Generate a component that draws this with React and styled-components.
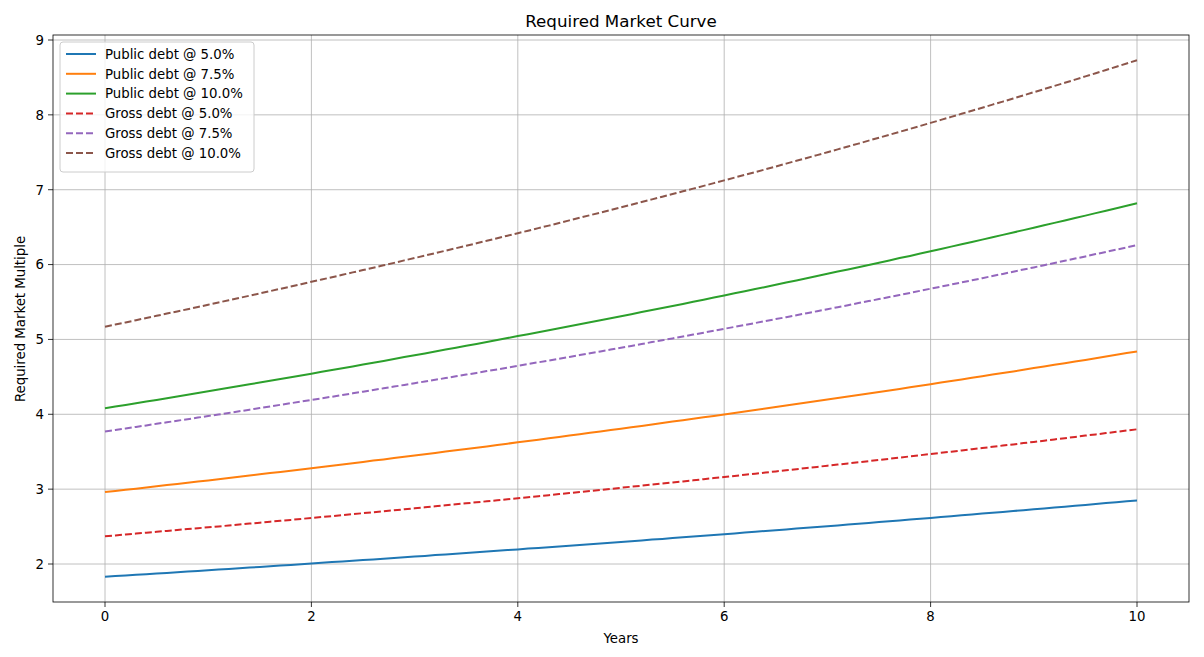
import React from "react";
import styled, { createGlobalStyle } from "styled-components";

const Global = createGlobalStyle`
  html, body { margin: 0; padding: 0; background: #fff; }
  body { font-family: "DejaVu Sans", sans-serif; }
`;

const Figure = styled.div`
  width: 1204px;
  height: 657px;
  background: #fff;
  overflow: hidden;
`;

const L = 53, R = 1189, T = 35, B = 602;
const xs = (t) => 105 + t * 103.2;
const ys = (v) => 564 - (v - 2) * 74.857;

const series = [
  { label: "Public debt @ 5.0%", c: "#1f77b4", v0: 1.83, v1: 2.85, dash: false },
  { label: "Public debt @ 7.5%", c: "#ff7f0e", v0: 2.96, v1: 4.84, dash: false },
  { label: "Public debt @ 10.0%", c: "#2ca02c", v0: 4.08, v1: 6.82, dash: false },
  { label: "Gross debt @ 5.0%", c: "#d62728", v0: 2.37, v1: 3.8, dash: true },
  { label: "Gross debt @ 7.5%", c: "#9467bd", v0: 3.77, v1: 6.26, dash: true },
  { label: "Gross debt @ 10.0%", c: "#8c564b", v0: 5.17, v1: 8.73, dash: true },
];

const pts = (s) => {
  const r = s.v1 / s.v0;
  const a = [];
  for (let i = 0; i <= 100; i++) {
    const t = i / 10;
    const exp = s.v0 * Math.pow(r, t / 10);
    const lin = s.v0 + (s.v1 - s.v0) * t / 10;
    const v = exp * 0.8 + lin * 0.2;
    a.push(`${xs(t).toFixed(1)},${ys(v).toFixed(1)}`);
  }
  return a.join(" ");
};

export default function App() {
  const xt = [0, 2, 4, 6, 8, 10];
  const yt = [2, 3, 4, 5, 6, 7, 8, 9];
  return (
    <Figure>
      <Global />
      <svg width="1204" height="657" fontFamily="DejaVu Sans, sans-serif">
        <defs>
          <clipPath id="ax"><rect x={L} y={T} width={R - L} height={B - T} /></clipPath>
        </defs>
        <text x="621" y="27" fontSize="16.7" textAnchor="middle" fill="#000">Required Market Curve</text>
        {xt.map((t) => (
          <g key={t}>
            <line x1={xs(t)} x2={xs(t)} y1={T} y2={B} stroke="#b0b0b0" strokeWidth="0.8" />
            <line x1={xs(t)} x2={xs(t)} y1={B} y2={B + 5} stroke="#000" strokeWidth="0.8" />
            <text x={xs(t)} y={B + 19} fontSize="13.3" textAnchor="middle">{t}</text>
          </g>
        ))}
        {yt.map((v) => (
          <g key={v}>
            <line x1={L} x2={R} y1={ys(v)} y2={ys(v)} stroke="#b0b0b0" strokeWidth="0.8" />
            <line x1={L - 5} x2={L} y1={ys(v)} y2={ys(v)} stroke="#000" strokeWidth="0.8" />
            <text x={L - 9} y={ys(v) + 4.8} fontSize="13.3" textAnchor="end">{v}</text>
          </g>
        ))}
        <g clipPath="url(#ax)">
          {series.map((s) => (
            <polyline key={s.label} points={pts(s)} fill="none" stroke={s.c} strokeWidth="2"
              strokeDasharray={s.dash ? "7 3" : undefined} />
          ))}
        </g>
        <rect x={L} y={T} width={R - L} height={B - T} fill="none" stroke="#000" strokeWidth="0.8" />
        <text x="621" y="643" fontSize="13.3" textAnchor="middle">Years</text>
        <text transform="translate(25 319) rotate(-90)" fontSize="13.3" textAnchor="middle">Required Market Multiple</text>
        <rect x="60" y="42" width="194" height="130" rx="3" fill="#fff" fillOpacity="0.8" stroke="#ccc" strokeWidth="1" />
        {series.map((s, i) => {
          const y = 54 + i * 19.8;
          return (
            <g key={s.label}>
              <line x1="66" x2="96" y1={y} y2={y} stroke={s.c} strokeWidth="2" strokeDasharray={s.dash ? "7 3" : undefined} />
              <text x="105" y={y + 4.8} fontSize="13.3">{s.label}</text>
            </g>
          );
        })}
      </svg>
    </Figure>
  );
}
